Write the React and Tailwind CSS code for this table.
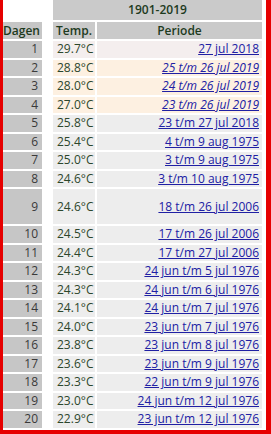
const rows = [
  [1, "29.7°C", "27 jul 2018", "pink"],
  [2, "28.8°C", "25 t/m 26 jul 2019", "peach"],
  [3, "28.0°C", "24 t/m 26 jul 2019", "peach"],
  [4, "27.0°C", "23 t/m 26 jul 2019", "peach"],
  [5, "25.8°C", "23 t/m 27 jul 2018", "gray"],
  [6, "25.4°C", "4 t/m 9 aug 1975", "gray"],
  [7, "25.0°C", "3 t/m 9 aug 1975", "gray"],
  [8, "24.6°C", "3 t/m 10 aug 1975", "gray"],
  [9, "24.6°C", "18 t/m 26 jul 2006", "gray"],
  [10, "24.5°C", "17 t/m 26 jul 2006", "gray"],
  [11, "24.4°C", "17 t/m 27 jul 2006", "gray"],
  [12, "24.3°C", "24 jun t/m 5 jul 1976", "gray"],
  [13, "24.3°C", "24 jun t/m 6 jul 1976", "gray"],
  [14, "24.1°C", "24 jun t/m 7 jul 1976", "gray"],
  [15, "24.0°C", "23 jun t/m 7 jul 1976", "gray"],
  [16, "23.8°C", "23 jun t/m 8 jul 1976", "gray"],
  [17, "23.6°C", "23 jun t/m 9 jul 1976", "gray"],
  [18, "23.3°C", "22 jun t/m 9 jul 1976", "gray"],
  [19, "23.0°C", "24 jun t/m 12 jul 1976", "gray"],
  [20, "22.9°C", "23 jun t/m 12 jul 1976", "gray"],
];

const bgClass = {
  pink: "bg-[#f4eeee]",
  peach: "bg-[#fdf0e1]",
  gray: "bg-[#ededed]",
};

export default function App() {
  return (
    <div
      className="w-[271px] h-[434px] bg-white border-l-[3px] border-r-[5px] border-b-[4px] border-[#e60000] overflow-hidden text-[12px] leading-none"
      style={{ fontFamily: '"Open Sans", "Noto Sans", sans-serif' }}
    >
      <div className="flex flex-col gap-[2px]">
        <div className="flex h-[20px]">
          <div className="w-[50px]" />
          <div className="w-[209px] bg-[#cacaca] flex items-center justify-center font-semibold text-[#1d3a1d]">
            1901-2019
          </div>
        </div>
        <div className="flex h-[17px]">
          <div className="w-[39px] bg-[#c6c6c6] flex items-center text-[#1d3a1d] font-semibold">
            Dagen
          </div>
          <div className="w-[11px]" />
          <div className="w-[42px] bg-[#cacaca] flex items-center justify-center text-[#1d3a1d] font-semibold">
            Temp.
          </div>
          <div className="w-[2px]" />
          <div className="w-[165px] bg-[#cacaca] flex items-center justify-center text-[#1d3a1d] font-semibold">
            Periode
          </div>
        </div>
        {rows.map(([n, t, p, c]) => (
          <div key={n} className={n === 9 ? "flex h-[35px]" : "flex h-[16.5px]"}>
            <div className="w-[39px] bg-[#c6c6c6] flex items-center justify-end pr-[4px] text-[#3a3a3a]">
              {n}
            </div>
            <div className="w-[11px]" />
            <div className={`w-[42px] ${bgClass[c]} flex items-center pl-[4px] text-[#2c462c]`}>
              {t}
            </div>
            <div className="w-[2px]" />
            <div className={`w-[165px] ${bgClass[c]} flex items-center justify-end pr-[3px]`}>
              <span className={`text-[#2020a4] underline ${c === "peach" ? "italic" : ""}`}>{p}</span>
            </div>
          </div>
        ))}
      </div>
    </div>
  );
}
